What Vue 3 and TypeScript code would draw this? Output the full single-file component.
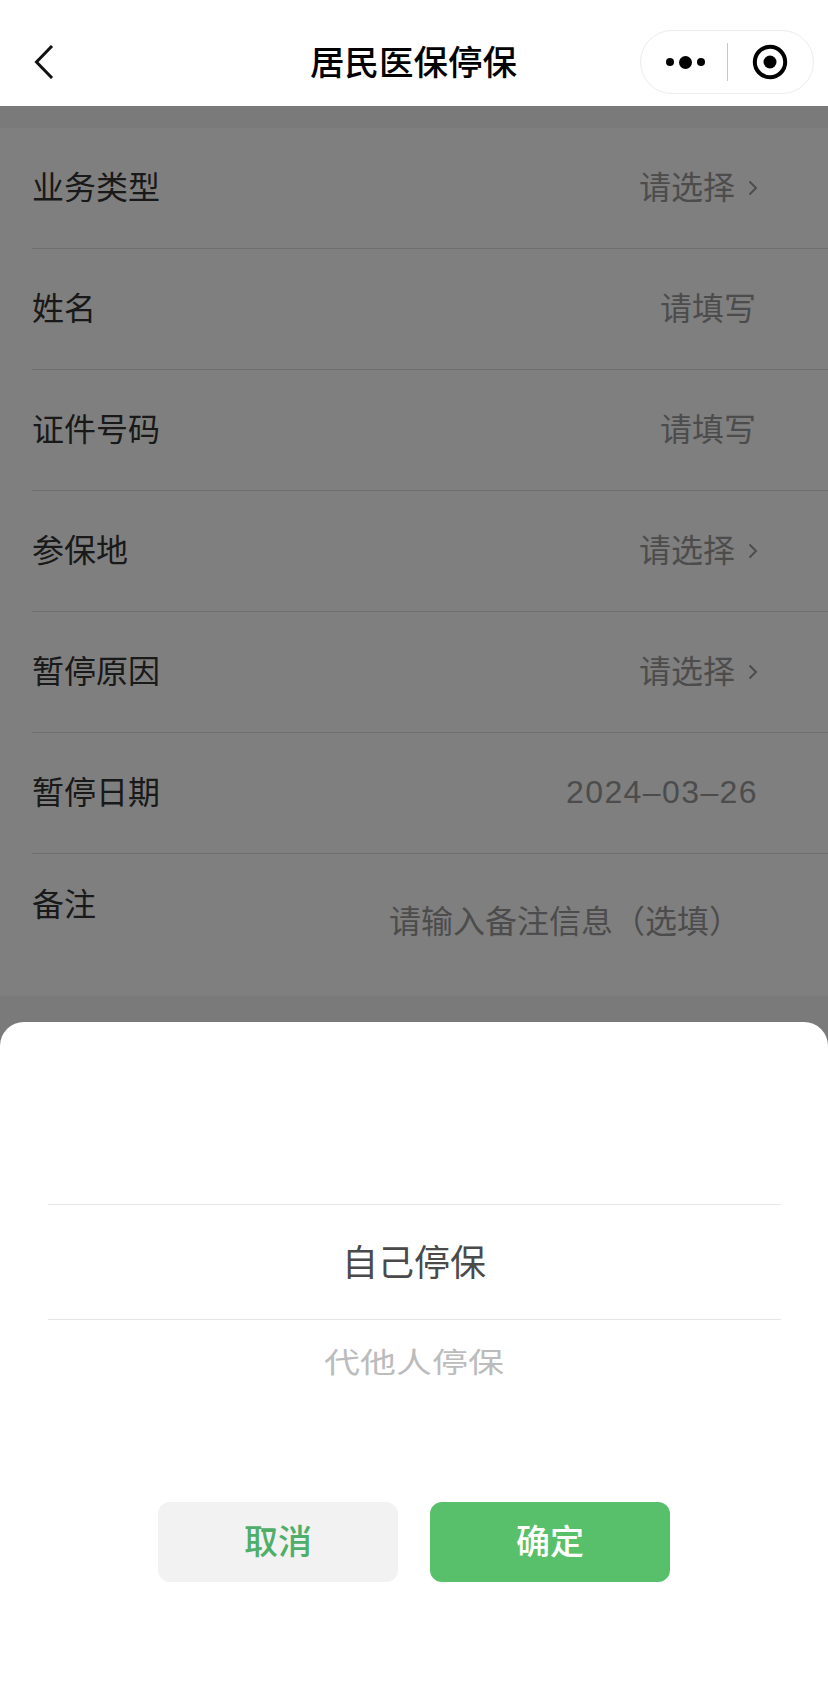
<script setup lang="ts">
interface Row {
  label: string
  value: string
  arrow: boolean
  date?: boolean
}
const rows: Row[] = [
  { label: '业务类型', value: '请选择', arrow: true },
  { label: '姓名', value: '请填写', arrow: false },
  { label: '证件号码', value: '请填写', arrow: false },
  { label: '参保地', value: '请选择', arrow: true },
  { label: '暂停原因', value: '请选择', arrow: true },
  { label: '暂停日期', value: '2024–03–26', arrow: false, date: true },
]
</script>

<template>
  <div class="page">
    <header class="nav">
      <svg class="back" width="20" height="34" viewBox="0 0 20 34" fill="none">
        <path d="M18 1 L2.5 17 L18 33" stroke="#111" stroke-width="3" />
      </svg>
      <h1 class="title">居民医保停保</h1>
      <div class="capsule">
        <div class="dots">
          <i class="dot"></i><i class="dot big"></i><i class="dot"></i>
        </div>
        <i class="sep"></i>
        <svg class="target" width="36" height="36" viewBox="0 0 36 36">
          <circle cx="18" cy="18" r="15.2" fill="none" stroke="#000" stroke-width="4" />
          <circle cx="18" cy="18" r="6.5" fill="#000" />
        </svg>
      </div>
    </header>

    <main class="content">
      <form class="form">
        <div v-for="r in rows" :key="r.label" class="row">
          <span class="label">{{ r.label }}</span>
          <span class="value" :class="{ date: r.date, plain: !r.arrow && !r.date }">{{ r.value }}</span>
          <svg v-if="r.arrow" class="arrow" width="10" height="16" viewBox="0 0 10 16" fill="none">
            <path d="M1.5 1.5 L8 8 L1.5 14.5" stroke="#999" stroke-width="2" />
          </svg>
        </div>
        <div class="row note">
          <span class="label">备注</span>
          <span class="note-ph">请输入备注信息（选填）</span>
        </div>
      </form>
      <div class="mask"></div>
    </main>

    <section class="sheet">
      <div class="picker">
        <div class="option selected">自己停保</div>
        <div class="option other"><span>代他人停保</span></div>
      </div>
      <div class="actions">
        <button class="btn cancel" type="button">取消</button>
        <button class="btn ok" type="button">确定</button>
      </div>
    </section>
  </div>
</template>

<style>
html, body { margin: 0; background: #f5f5f5; }
</style>

<style scoped>
.page {
  position: relative;
  width: 828px;
  height: 1684px;
  overflow: hidden;
  font-family: "Noto Sans CJK SC", "Liberation Sans", sans-serif;
  background: #f5f5f5;
}
.nav {
  position: relative;
  height: 106px;
  background: #fff;
  display: flex;
  align-items: center;
  justify-content: center;
}
.back { position: absolute; left: 34px; top: 45px; }
.title {
  margin: 0 1px 0 0;
  font-size: 34.5px;
  font-weight: 500;
  color: #000;
  line-height: 40px;
  padding-top: 14px;
}
.capsule {
  position: absolute;
  left: 640px;
  top: 30px;
  width: 174px;
  height: 64px;
  box-sizing: border-box;
  border: 1px solid #ececec;
  border-radius: 32px;
  display: flex;
  align-items: center;
}
.dots { display: flex; align-items: center; gap: 5px; margin-left: 25px; width: 61px; }
.dot { width: 8px; height: 8px; border-radius: 50%; background: #000; }
.dot.big { width: 13px; height: 13px; }
.sep { width: 1px; height: 38px; background: #c9c9c9; margin-left: 0; }
.target { margin-left: 24px; }
.content { position: relative; padding-top: 22px; height: 1578px; box-sizing: border-box; }
.form { background: #fff; padding-left: 32px; }
.row {
  height: 121px;
  box-sizing: border-box;
  border-bottom: 1px solid #ddd;
  display: flex;
  align-items: center;
  padding: 0 70px 6px 0;
}
.label { font-size: 32px; color: #333; flex: 1; }
.value { font-size: 32px; color: #999; margin-left: auto; }
.value.plain { margin-right: 2px; }
.value.date {
  margin-top: 5px;
  letter-spacing: 1.4px;
  font-family: "Liberation Sans", sans-serif;
}
.arrow { margin: 6px 0 0 13px; }
.row.note {
  height: 142px;
  padding: 0 70px 0 0;
  border-bottom: 0;
  align-items: flex-start;
}
.note .label { margin-top: 25px; }
.note-ph { font-size: 32px; color: #999; margin-top: 42px; margin-right: 17px; }
.mask { position: absolute; inset: 0; background: rgba(0, 0, 0, 0.5); }
.sheet {
  position: absolute;
  left: 0;
  right: 0;
  top: 1022px;
  bottom: 0;
  background: #fff;
  border-radius: 24px 24px 0 0;
  display: flex;
  flex-direction: column;
  align-items: center;
}
.picker { width: 733px; margin-top: 182px; }
.option { display: flex; align-items: center; justify-content: center; }
.selected {
  height: 116px;
  box-sizing: border-box;
  border-top: 1px solid #e6e6e6;
  border-bottom: 1px solid #e6e6e6;
  padding-bottom: 5px;
  font-size: 36px;
  color: #4a4a4a;
}
.other { height: 86px; font-size: 36px; color: #bcbcbc; padding-bottom: 6px; box-sizing: border-box; }
.other span { display: block; transform: scaleY(0.8); }
.actions { display: flex; gap: 32px; margin-top: 96px; }
.btn {
  width: 240px;
  height: 80px;
  border: 0;
  border-radius: 12px;
  font: 500 34px "Noto Sans CJK SC", sans-serif;
  padding: 0 0 5px;
}
.cancel { background: #f2f2f2; color: #4fae68; }
.ok { background: #58c06b; color: #fff; }
</style>
